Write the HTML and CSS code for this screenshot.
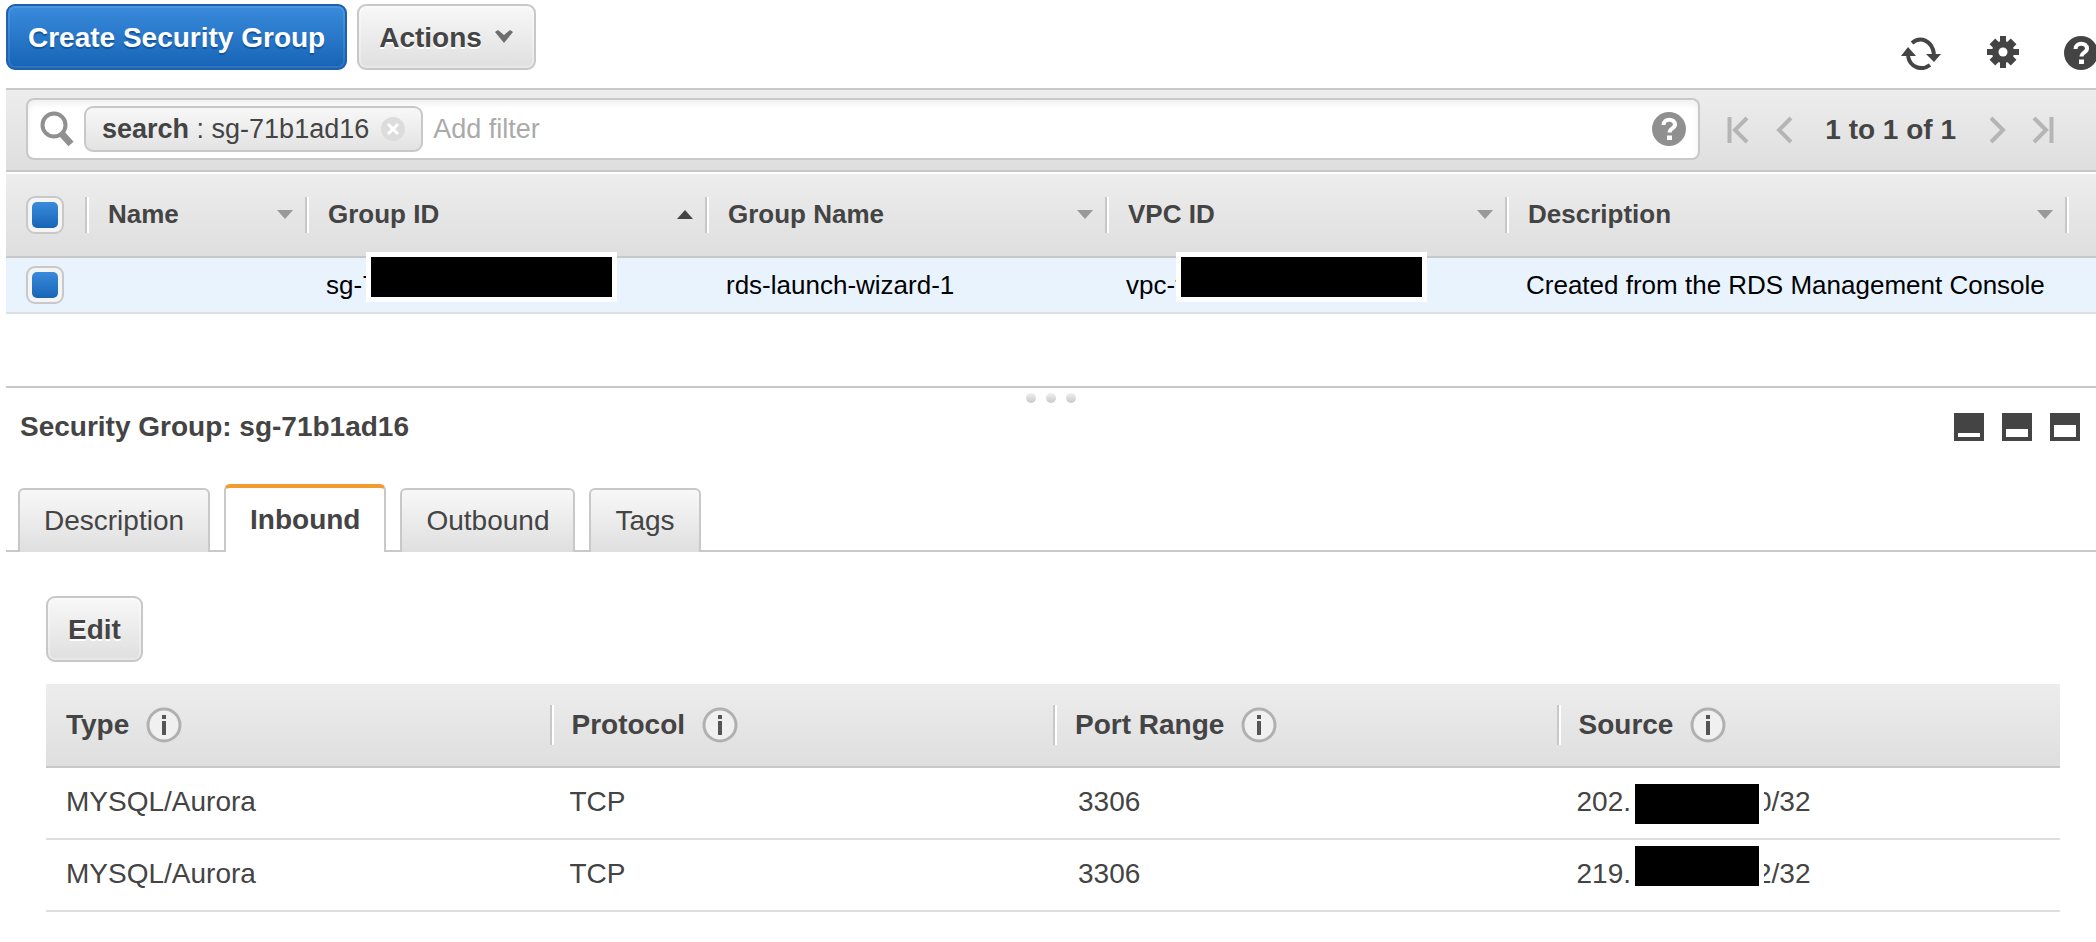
FILE: index.html
```html
<!DOCTYPE html>
<html lang="en">
<head>
  <meta charset="UTF-8">
  <meta name="viewport" content="width=device-width, initial-scale=1.0">
  <title>Security Groups</title>
  <link rel="stylesheet" href="styles.css">
</head>
<body>
  <header class="toolbar">
    <button type="button" class="btn btn-primary">Create Security Group</button>
    <button type="button" class="btn">Actions
      <svg class="caret" width="20" height="14" viewBox="0 0 20 14"><path d="M1 3l3-2 6 5 6-5 3 2-9 11z" fill="#6e6e6e"/></svg>
    </button>
    <div class="tools">
      <button type="button" class="icon-btn" aria-label="Refresh">
        <svg width="42" height="34" viewBox="0 0 42 34" fill="none" stroke="#444" stroke-width="4">
          <path d="M12 7C20 0 32 4 34 18"/>
          <path d="M30 29C22 35 10 32 8 20"/>
          <path d="M26 18h15l-7 8zM1 20h15l-8-9z" fill="#444" stroke="none"/>
        </svg>
      </button>
      <button type="button" class="icon-btn" aria-label="Settings">
        <svg width="32" height="34" viewBox="-16 -16 32 34">
          <g fill="#444">
            <path d="M-3-16h6v32h-6z"/>
            <path d="M-4-15h8v30h-8z" transform="rotate(45)"/>
            <path d="M-3-16h6v32h-6z" transform="rotate(90)"/>
            <path d="M-4-15h8v30h-8z" transform="rotate(135)"/>
            <circle r="11"/>
          </g>
          <circle r="4.500" fill="#fff"/>
        </svg>
      </button>
      <button type="button" class="icon-btn" aria-label="Help">
        <svg width="34" height="34" viewBox="0 0 34 34"><circle cx="17" cy="17" r="17" fill="#444"/><path d="M11.500 13c0-7 11.500-7 11.500-.5 0 4-5.500 4-5.500 8" fill="none" stroke="#fff" stroke-width="4"/><path d="M15 23.500h5v4.500h-5z" fill="#fff"/></svg>
      </button>
    </div>
  </header>

  <div class="filter-bar">
    <div class="search-box">
      <svg class="magnifier" width="34" height="36" viewBox="0 0 34 36" fill="none" stroke="#909090"><circle cx="14" cy="14" r="11.500" stroke-width="4"/><path d="M22 23l9 10" stroke-width="7"/></svg>
      <div class="tag">
        <span><b>search</b> : sg-71b1ad16</span>
        <button type="button" class="icon-btn" aria-label="Remove filter">
          <svg width="24" height="24" viewBox="0 0 24 24"><circle cx="12" cy="12" r="12" fill="#dcdcdc"/><path d="M7 7l10 10M17 7L7 17" stroke="#fff" stroke-width="3"/></svg>
        </button>
      </div>
      <input type="text" class="filter-input" placeholder="Add filter" aria-label="Add filter">
      <button type="button" class="icon-btn" aria-label="Search help">
        <svg width="34" height="34" viewBox="0 0 34 34"><circle cx="17" cy="17" r="17" fill="#909090"/><path d="M11.500 13c0-7 11.500-7 11.500-.5 0 4-5.500 4-5.500 8" fill="none" stroke="#fff" stroke-width="4"/><path d="M15 23.500h5v4.500h-5z" fill="#fff"/></svg>
      </button>
    </div>
    <nav class="pager" aria-label="Pages">
      <button type="button" class="icon-btn" aria-label="First page"><svg width="22" height="28" viewBox="0 0 22 28"><path d="M2.500 1v26M20 2L8 14l12 12"/></svg></button>
      <button type="button" class="icon-btn" aria-label="Previous page"><svg width="22" height="28" viewBox="0 0 22 28"><path d="M18 2L6 14l12 12"/></svg></button>
      <span class="page-count">1 to 1 of 1</span>
      <button type="button" class="icon-btn" aria-label="Next page"><svg width="22" height="28" viewBox="0 0 22 28"><path d="M5 2l12 12L5 26"/></svg></button>
      <button type="button" class="icon-btn" aria-label="Last page"><svg width="22" height="28" viewBox="0 0 22 28"><path d="M19.500 1v26M2 2l12 12L2 26"/></svg></button>
    </nav>
  </div>

  <table class="groups">
    <colgroup>
      <col class="col-check"><col class="col-name"><col class="col-mid"><col class="col-mid"><col class="col-mid"><col class="col-desc"><col>
    </colgroup>
    <thead>
      <tr>
        <th class="check"><input type="checkbox" checked aria-label="Select all"></th>
        <th><button type="button" class="sort">Name <span class="arrow"></span></button></th>
        <th><button type="button" class="sort">Group ID <span class="arrow up"></span></button></th>
        <th><button type="button" class="sort">Group Name <span class="arrow"></span></button></th>
        <th><button type="button" class="sort">VPC ID <span class="arrow"></span></button></th>
        <th><button type="button" class="sort">Description <span class="arrow"></span></button></th>
        <th><div class="sort"></div></th>
      </tr>
    </thead>
    <tbody>
      <tr>
        <td class="check"><input type="checkbox" checked aria-label="Select rds-launch-wizard-1"></td>
        <td></td>
        <td>sg-<span class="masked">7<span class="mask"></span></span></td>
        <td>rds-launch-wizard-1</td>
        <td>vpc-<span class="masked">f<span class="mask mask-vpc"></span></span></td>
        <td>Created from the RDS Management Console</td>
        <td></td>
      </tr>
    </tbody>
  </table>

  <div class="splitter"><i></i><i></i><i></i></div>

  <section class="details">
    <div class="details-head">
      <h2>Security Group: sg-71b1ad16</h2>
      <div class="layout-btns">
        <button type="button" class="icon-btn" aria-label="Minimize panel"><svg width="30" height="28" viewBox="0 0 30 28"><path d="M0 0h30v28H0z" fill="#444"/><path d="M4 20h22v4H4z" fill="#fff"/></svg></button>
        <button type="button" class="icon-btn" aria-label="Half panel"><svg width="30" height="28" viewBox="0 0 30 28"><path d="M0 0h30v28H0z" fill="#444"/><path d="M4 16h22v8H4z" fill="#fff"/></svg></button>
        <button type="button" class="icon-btn" aria-label="Full panel"><svg width="30" height="28" viewBox="0 0 30 28"><path d="M0 0h30v28H0z" fill="#444"/><path d="M4 12h22v12H4z" fill="#fff"/></svg></button>
      </div>
    </div>

    <div class="tabs" role="tablist">
      <button type="button" class="tab" role="tab">Description</button>
      <button type="button" class="tab active" role="tab" aria-selected="true">Inbound</button>
      <button type="button" class="tab" role="tab">Outbound</button>
      <button type="button" class="tab" role="tab">Tags</button>
    </div>

    <div class="tab-body">
      <button type="button" class="btn">Edit</button>
      <table class="rules">
        <thead>
          <tr>
            <th><div class="rule-head">Type <svg class="info" width="36" height="36" viewBox="0 0 36 36"><circle cx="18" cy="18" r="16" fill="#f0f0f0" stroke="#b0b0b0" stroke-width="3"/><path d="M16 8h4v4h-4zM16 14h4v14h-4z" fill="#555"/></svg></div></th>
            <th><div class="rule-head">Protocol <svg class="info" width="36" height="36" viewBox="0 0 36 36"><circle cx="18" cy="18" r="16" fill="#f0f0f0" stroke="#b0b0b0" stroke-width="3"/><path d="M16 8h4v4h-4zM16 14h4v14h-4z" fill="#555"/></svg></div></th>
            <th><div class="rule-head">Port Range <svg class="info" width="36" height="36" viewBox="0 0 36 36"><circle cx="18" cy="18" r="16" fill="#f0f0f0" stroke="#b0b0b0" stroke-width="3"/><path d="M16 8h4v4h-4zM16 14h4v14h-4z" fill="#555"/></svg></div></th>
            <th><div class="rule-head">Source <svg class="info" width="36" height="36" viewBox="0 0 36 36"><circle cx="18" cy="18" r="16" fill="#f0f0f0" stroke="#b0b0b0" stroke-width="3"/><path d="M16 8h4v4h-4zM16 14h4v14h-4z" fill="#555"/></svg></div></th>
          </tr>
        </thead>
        <tbody>
          <tr>
            <td>MYSQL/Aurora</td>
            <td>TCP</td>
            <td class="port">3306</td>
            <td>202.<span class="masked ip">0/32<span class="mask mask-ip"></span></span></td>
          </tr>
          <tr>
            <td>MYSQL/Aurora</td>
            <td>TCP</td>
            <td class="port">3306</td>
            <td>219.<span class="masked ip">2/32<span class="mask mask-ip high"></span></span></td>
          </tr>
        </tbody>
      </table>
    </div>
  </section>
</body>
</html>
```
FILE: styles.css
```css
* {
  box-sizing: border-box;
}
body {
  margin: 0;
  padding-left: 6px;
  background: #fff;
  color: #444;
  font-family: "Liberation Sans", Arial, sans-serif;
  font-size: 28px;
  line-height: 32px;
  overflow-x: hidden;
}
button, input {
  font: inherit;
  color: inherit;
}
svg {
  display: block;
}
.icon-btn {
  border: none;
  padding: 0;
  background: none;
  flex: none;
}

/* toolbar */
.toolbar {
  display: flex;
  gap: 10px;
  padding: 4px 0 18px;
}
.btn {
  display: flex;
  align-items: center;
  gap: 12px;
  height: 66px;
  padding: 2px 20px 0;
  border: 2px solid #c8c8c8;
  border-radius: 9px;
  background: linear-gradient(#f8f8f8, #dfdfdf);
  box-shadow: inset 0 0 0 2px rgba(255, 255, 255, 0.3);
  font-weight: bold;
  text-shadow: 0 2px 0 #fff;
}
.btn-primary {
  border-color: #1c62ae;
  background: linear-gradient(#3a8bdc, #1764b6);
  box-shadow: inset 0 0 0 2px rgba(255, 255, 255, 0.1);
  color: #fff;
  text-shadow: 0 2px 1px #14549a;
}
.caret {
  margin-top: -5px;
}
.tools {
  display: flex;
  align-items: center;
  align-self: flex-end;
  gap: 45px;
  margin-left: auto;
  margin-right: -2px;
}

/* filter bar */
.filter-bar {
  display: flex;
  align-items: center;
  padding: 8px 0 10px 20px;
  border-top: 2px solid #c8c8c8;
  border-bottom: 2px solid #c8c8c8;
  background: linear-gradient(#ededed, #dedede);
  margin-bottom: 2px;
}
.search-box {
  display: flex;
  flex: 1;
  align-items: center;
  height: 62px;
  padding: 0 12px;
  border: 2px solid #c8c8c8;
  border-radius: 8px;
  background: #fff;
  box-shadow: inset 0 4px 6px #f0f0f0;
}
.magnifier {
  margin-right: 10px;
}
.tag {
  display: flex;
  align-items: center;
  gap: 12px;
  height: 46px;
  padding: 0 16px;
  border: 2px solid #c8c8c8;
  border-radius: 9px;
  background: linear-gradient(#f8f8f8, #e3e3e3);
  font-size: 27px;
  white-space: nowrap;
}
.filter-input {
  flex: 1;
  min-width: 0;
  padding: 0 10px;
  border: none;
  background: none;
  font-size: 27px;
}
.filter-input::placeholder {
  color: #aaa;
}
.pager {
  display: flex;
  align-items: center;
  gap: 24px;
  padding: 2px 42px 0 27px;
}
.pager svg {
  fill: none;
  stroke: #b5b5b5;
  stroke-width: 4;
}
.page-count {
  margin: 0 6px;
  font-weight: bold;
}

/* tables */
table {
  width: 100%;
  border-spacing: 0;
  table-layout: fixed;
}
th, td {
  padding: 0;
  text-align: left;
}
thead {
  background: linear-gradient(#ededed, #dedede);
}
th {
  height: 84px;
  border-bottom: 2px solid #c8c8c8;
}
.groups {
  font-size: 26px;
}
.col-check {
  width: 79px;
}
.col-name {
  width: 220px;
}
.col-mid {
  width: 400px;
}
.col-desc {
  width: 560px;
}
.sort {
  display: flex;
  align-items: center;
  justify-content: space-between;
  width: 100%;
  height: 36px;
  padding: 0 12px 2px 21px;
  border: none;
  border-left: 2px solid #c8c8c8;
  background: none;
  box-shadow: inset 2px 0 0 #fff;
  font-weight: bold;
}
.arrow {
  border: 8px solid transparent;
  border-top: 9px solid #999;
  border-bottom: none;
}
.arrow.up {
  border-top: none;
  border-bottom: 9px solid #444;
}
.groups td {
  height: 56px;
  padding-left: 21px;
  border-bottom: 2px solid #dcdfe2;
  background: #e8f3fe;
  color: #000;
  white-space: nowrap;
}
.groups .check {
  padding-left: 20px;
}
.check input {
  appearance: none;
  display: block;
  width: 38px;
  height: 38px;
  margin: 0;
  padding: 4px;
  border: 2px solid #c8c8c8;
  border-radius: 9px;
  background: #f4f4f4;
}
.check input:checked::before {
  content: "";
  display: block;
  height: 26px;
  border-radius: 5px;
  background: linear-gradient(#3a8bdc, #1764b6);
}

/* blacked out ids */
.masked {
  position: relative;
}
.mask {
  position: absolute;
  top: -18px;
  left: 4px;
  width: 251px;
  height: 50px;
  border: 5px solid #fff;
  background: #000;
}
.mask-vpc {
  left: 1px;
}
.masked.ip {
  margin-left: 125px;
}
.mask-ip {
  top: -7px;
  left: auto;
  right: 47px;
  width: 134px;
}
.mask-ip.high {
  top: -17px;
}

/* splitter */
.splitter {
  display: flex;
  justify-content: center;
  gap: 10px;
  margin-top: 72px;
  padding: 5px 0 8px;
  border-top: 2px solid #c8c8c8;
}
.splitter i {
  width: 10px;
  height: 10px;
  border-radius: 5px;
  background: linear-gradient(#f0f0f0, #c8c8c8);
}

/* details panel */
.details-head {
  display: flex;
  align-items: center;
  justify-content: space-between;
  padding: 0 16px 0 14px;
}
.details-head h2 {
  margin: 0;
  font-size: 28px;
}
.layout-btns {
  display: flex;
  gap: 18px;
}
.tabs {
  display: flex;
  align-items: flex-end;
  gap: 14px;
  margin-top: 41px;
  padding-left: 12px;
  border-bottom: 2px solid #c8c8c8;
}
.tab {
  height: 64px;
  margin-bottom: -2px;
  padding: 0 24px;
  border: 2px solid #c8c8c8;
  border-bottom: none;
  border-radius: 6px 6px 0 0;
  background: linear-gradient(#f8f8f8, #dfdfdf);
}
.tab.active {
  height: 68px;
  border-top: 4px solid #f49b2f;
  background: #fff;
  font-weight: bold;
}
.tab-body {
  padding: 44px 36px 0 40px;
}
.rules {
  margin-top: 22px;
}
.rule-head {
  display: flex;
  align-items: center;
  gap: 17px;
  height: 40px;
  padding-left: 20px;
}
th + th .rule-head {
  border-left: 2px solid #c8c8c8;
  box-shadow: inset 2px 0 0 #fff;
}
.rules td {
  height: 72px;
  padding: 0 0 2px 20px;
  border-bottom: 2px solid #dedede;
}
.rules .port {
  padding-left: 25px;
}
```
